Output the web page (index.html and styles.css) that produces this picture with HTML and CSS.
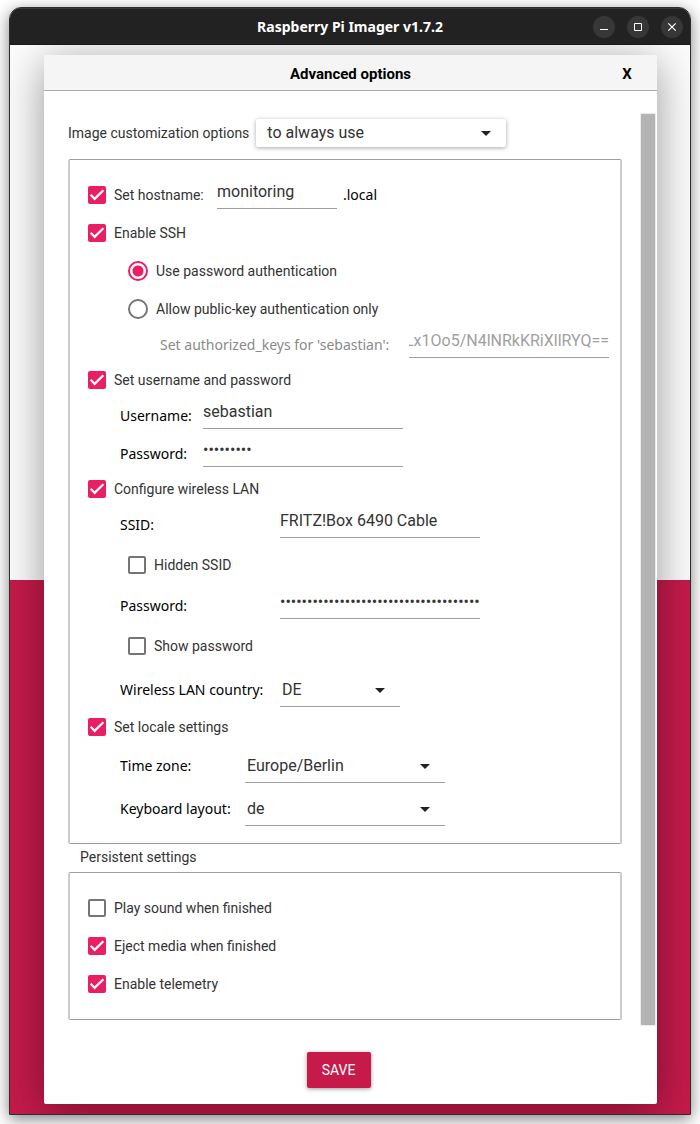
FILE: index.html
```html
<!DOCTYPE html>
<html lang="en">
<head>
<meta charset="utf-8">
<meta name="viewport" content="width=device-width, initial-scale=1">
<title>Raspberry Pi Imager v1.7.2</title>
<link rel="stylesheet" href="styles.css">
</head>
<body>
<div class="window">
  <header class="titlebar">
    <h1 class="window-title">Raspberry Pi Imager v1.7.2</h1>
    <div class="window-buttons">
      <button type="button" class="window-button" aria-label="Minimize"><svg width="22" height="22" viewBox="0 0 22 22"><path d="M7 13.5h8" stroke="#fff" fill="none"/></svg></button>
      <button type="button" class="window-button" aria-label="Maximize"><svg width="22" height="22" viewBox="0 0 22 22"><path d="M7.5 7.5h7v7h-7z" stroke="#fff" fill="none"/></svg></button>
      <button type="button" class="window-button" aria-label="Close"><svg width="22" height="22" viewBox="0 0 22 22"><path d="M7.3 7.3l7.4 7.4M14.7 7.3l-7.4 7.4" stroke="#fff" stroke-width="1.2" fill="none"/></svg></button>
    </div>
  </header>
  <main class="stage">
    <form class="dialog">
      <div class="dialog-header">
        <h2 class="dialog-title">Advanced options</h2>
        <button type="button" class="dialog-close">X</button>
      </div>
      <div class="dialog-body">
        <div class="settings">
          <div class="scope">
            <label for="scope">Image customization options</label>
            <span class="select scope-select">
              <select id="scope"><option>to always use</option></select>
              <svg class="caret" width="10" height="5" viewBox="0 0 10 5"><path d="M0 0h10L5 5z"/></svg>
            </span>
          </div>
          <div class="group">
            <div class="row hostname">
              <label class="option"><input type="checkbox" checked>Set hostname:</label>
              <input class="field field-small" type="text" value="monitoring" aria-label="Hostname">
              <span class="suffix">.local</span>
            </div>
            <label class="option"><input type="checkbox" checked>Enable SSH</label>
            <label class="option nested"><input type="radio" name="auth" checked>Use password authentication</label>
            <label class="option nested"><input type="radio" name="auth">Allow public-key authentication only</label>
            <div class="row keys">
              <label for="keys">Set authorized_keys for 'sebastian':</label>
              <input class="field" id="keys" type="text" value="Lx1Oo5/N4lNRkKRiXllRYQ==" disabled>
            </div>
            <label class="option"><input type="checkbox" checked>Set username and password</label>
            <div class="fields fields-user">
              <div class="row"><label for="user">Username:</label><input class="field" id="user" type="text" value="sebastian"></div>
              <div class="row"><label for="pass">Password:</label><input class="field" id="pass" type="password" value="raspberry"></div>
            </div>
            <label class="option"><input type="checkbox" checked>Configure wireless LAN</label>
            <div class="fields fields-wifi">
              <div class="row"><label for="ssid">SSID:</label><input class="field" id="ssid" type="text" value="FRITZ!Box 6490 Cable"></div>
              <label class="option inner"><input type="checkbox">Hidden SSID</label>
              <div class="row"><label for="psk">Password:</label><input class="field" id="psk" type="password" value="0123456789012345678901234567890123456"></div>
              <label class="option inner"><input type="checkbox">Show password</label>
              <div class="row row-select">
                <label for="country">Wireless LAN country:</label>
                <span class="select line-select select-small"><select id="country"><option>DE</option></select><svg class="caret" width="10" height="5" viewBox="0 0 10 5"><path d="M0 0h10L5 5z"/></svg></span>
              </div>
            </div>
            <label class="option"><input type="checkbox" checked>Set locale settings</label>
            <div class="fields fields-locale">
              <div class="row row-select">
                <label for="zone">Time zone:</label>
                <span class="select line-select"><select id="zone"><option>Europe/Berlin</option></select><svg class="caret" width="10" height="5" viewBox="0 0 10 5"><path d="M0 0h10L5 5z"/></svg></span>
              </div>
              <div class="row row-select">
                <label for="layout">Keyboard layout:</label>
                <span class="select line-select"><select id="layout"><option>de</option></select><svg class="caret" width="10" height="5" viewBox="0 0 10 5"><path d="M0 0h10L5 5z"/></svg></span>
              </div>
            </div>
          </div>
          <h3 class="group-title">Persistent settings</h3>
          <div class="group">
            <label class="option"><input type="checkbox">Play sound when finished</label>
            <label class="option"><input type="checkbox" checked>Eject media when finished</label>
            <label class="option"><input type="checkbox" checked>Enable telemetry</label>
          </div>
        </div>
        <div class="scrollbar"></div>
      </div>
      <div class="dialog-actions"><button type="button" class="save">SAVE</button></div>
    </form>
  </main>
</div>
</body>
</html>
```
FILE: styles.css
```css
* { box-sizing: border-box; }

body {
  margin: 0;
  padding: 7px 9px 9px;
  background: #fff;
  color: #333;
  font: 14px/20px Roboto, sans-serif;
}

h1, h2, h3 { margin: 0; }
button, input, select { font: inherit; color: inherit; }

.window {
  border: 1px solid #2d2d2d;
  border-radius: 12px 12px 0 0;
  box-shadow: 0 4px 16px rgba(0, 0, 0, 0.5);
  overflow: hidden;
}

.titlebar {
  display: grid;
  grid-template-columns: 1fr auto 1fr;
  align-items: center;
  height: 37px;
  padding: 0 7px;
  background: #222;
  border-top: 1px solid #383838;
  border-bottom: 1px solid #191919;
}

.window-title {
  grid-column: 2;
  color: #fff;
  font: bold 14px/20px "Noto Sans", sans-serif;
}

.window-buttons { display: flex; justify-content: flex-end; gap: 12px; }

.window-button {
  width: 22px;
  height: 22px;
  padding: 0;
  border: 0;
  border-radius: 50%;
  background: #373737;
}

.window-button svg { display: block; }

.stage {
  overflow: hidden;
  padding: 10px 33px 10px 34px;
  background: linear-gradient(#fcfcfc calc(50% + 1px), #c51a4a calc(50% + 1px));
}

.dialog {
  background: #fff;
  border-radius: 2px;
  box-shadow: 0 8px 44px rgba(0, 0, 0, 0.4);
}

.dialog-header {
  display: grid;
  grid-template-columns: 60px 1fr 60px;
  align-items: center;
  height: 36px;
  padding-top: 2px;
  background: #f5f5f5;
  border-bottom: 1px solid #aaa;
  color: #000;
}

.dialog-title {
  grid-column: 2;
  text-align: center;
  font: bold 15px/20px Roboto, sans-serif;
}

.dialog-close {
  padding: 0;
  border: 0;
  background: none;
  font: bold 15px/20px Roboto, sans-serif;
}

.dialog-body { display: flex; gap: 18px; padding: 22px 1px 0 24px; }
.settings { flex: 1; padding: 6px 0; }
.scrollbar { width: 16px; background: #b4b4b4; border: 1px solid #ececec; }

.scope { display: flex; align-items: center; gap: 7px; margin-bottom: 12px; }

.select { position: relative; display: block; width: 200px; font-size: 16px; }

.select select {
  display: block;
  width: 100%;
  height: 28px;
  padding: 0 32px 0 11px;
  border: 0;
  outline: 0;
  background: none;
  appearance: none;
}

.caret { position: absolute; right: 15px; top: calc(50% - 2px); fill: #222; }

.scope-select {
  width: 250px;
  border-radius: 2px;
  background: #fff;
  box-shadow: 0 1px 4px rgba(0, 0, 0, 0.35);
}

.group {
  padding: 16px 11px 16px 18px;
  border: solid;
  border-width: 1px 2px;
  border-color: #9e9e9e #ccc;
  border-radius: 2px;
}

.group-title { padding: 3px 12px 5px; font: 14px/20px Roboto, sans-serif; }

.option { display: flex; align-items: center; gap: 8px; height: 38px; }
.nested { padding-left: 40px; }
.inner { padding-left: 8px; }

.option input {
  appearance: none;
  width: 18px;
  height: 18px;
  margin: 0;
  border: 2px solid #757575;
  border-radius: 2px;
}

.option input:checked { border: 0; background: #e91e63; }

.option input[type="checkbox"]:checked::before {
  content: "";
  display: block;
  height: 18px;
  background: #fff;
  clip-path: polygon(6.6px 11.2px, 3.4px 8px, 1.9px 9.5px, 6.6px 14.4px, 16.1px 5.1px, 14.6px 3.4px);
}

.option input[type="radio"] { width: 20px; height: 20px; border-radius: 50%; }

.option input[type="radio"]:checked {
  border: 2px solid #e91e63;
  background: radial-gradient(#e91e63 5px, #fff 6px);
}

.row { display: flex; align-items: flex-start; height: 33px; }
.row-select { height: 38px; }
.row > label:not(.option), .suffix { color: #000; font: 14px/34px "Noto Sans", sans-serif; }
.row-select > label:not(.option) { line-height: 40px; }

.field {
  width: 200px;
  height: 30px;
  padding: 0 0 5px;
  border: 0;
  border-bottom: 1px solid #9e9e9e;
  border-radius: 0;
  outline: 0;
  background: none;
  font-size: 16px;
}

.field-small { width: 120px; }

.hostname { align-items: center; height: 38px; }
.hostname .option { width: 129px; }
.hostname .field { margin-bottom: 2px; }
.hostname .suffix { margin-left: 6px; }

.keys { justify-content: space-between; padding-left: 72px; }
.row.keys > label { color: #8a8a8a; }
.keys .field { color: #a0a0a0; text-indent: -4px; }

.fields { display: flex; flex-direction: column; gap: 5px; padding-left: 32px; }
.fields-user .row > label { width: 83px; }
.fields-wifi .row > label { width: 160px; }
.fields-locale .row > label { width: 125px; }

.line-select { border-bottom: 1px solid #9e9e9e; }
.line-select select { height: 36px; padding: 3px 32px 0 2px; }
.line-select .caret { top: 50%; }
.select-small { width: 120px; }

.dialog-actions { display: flex; justify-content: center; padding: 26px 24px 16px; }

.dialog-actions { padding-left: 0; }

.save {
  width: 64px;
  height: 36px;
  padding: 0;
  border: 0;
  border-radius: 2px;
  background: #c51a4a;
  box-shadow: 0 1px 4px rgba(0, 0, 0, 0.4);
  color: #fff;
}
```
